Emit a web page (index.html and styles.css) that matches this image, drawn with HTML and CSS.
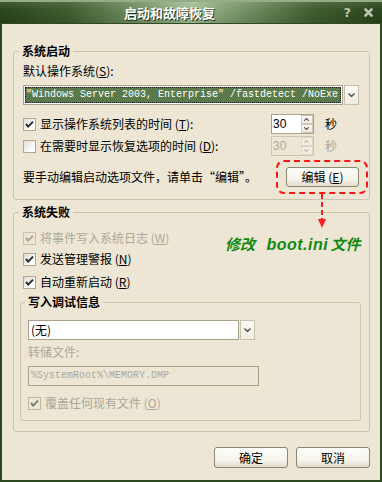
FILE: index.html
```html
<!DOCTYPE html>
<html lang="zh-CN">

<head>
  <meta charset="UTF-8">
  <title>启动和故障恢复</title>
  <link rel="stylesheet" href="styles.css">
</head>

<body>
  <div class="window">
    <div class="titlebar">
      <span class="title">启动和故障恢复</span>
      <span class="help">?</span>
      <svg class="close" width="9" height="9" viewBox="0 0 9 9">
        <path d="M1.5 1.5 L7.5 7.5 M7.5 1.5 L1.5 7.5" stroke="#bcc4b3" stroke-width="2.6" stroke-linecap="round" />
      </svg>
    </div>

    <div class="body">
      <div class="group">
        <div class="group-title">系统启动</div>
        <div class="label">默认操作系统(<u>S</u>):</div>
        <div class="combo combo-os">
          <div class="combo-field"><span class="sel">"Windows Server 2003, Enterprise" /fastdetect /NoExe</span></div>
          <div class="combo-btn"><svg width="7" height="4" viewBox="0 0 7 4"><path d="M0.5 0.5 L3.5 3.5 L6.5 0.5" fill="none" stroke="#4d4d4d" stroke-width="1.4" /></svg></div>
        </div>

        <div class="row">
          <span class="cb"><svg width="11" height="11" viewBox="0 0 11 11"><polyline points="2,5 4.2,7.6 9,2.6" fill="none" stroke="#2b2b2b" stroke-width="2" /></svg></span>
          <span class="cb-label">显示操作系统列表的时间 (<u>T</u>):</span>
          <div class="spin">
            <span class="spin-val">30</span>
            <span class="spin-btns">
              <span class="spin-b"><svg width="5" height="3" viewBox="0 0 5 3"><path d="M0.3 2.7 L2.5 0.5 L4.7 2.7" fill="none" stroke="#4d4d4d" stroke-width="1.1" /></svg></span>
              <span class="spin-b"><svg width="5" height="3" viewBox="0 0 5 3"><path d="M0.3 0.3 L2.5 2.5 L4.7 0.3" fill="none" stroke="#4d4d4d" stroke-width="1.1" /></svg></span>
            </span>
          </div>
          <span class="sec">秒</span>
        </div>

        <div class="row row-2">
          <span class="cb"></span>
          <span class="cb-label">在需要时显示恢复选项的时间 (<u>D</u>):</span>
          <div class="spin off">
            <span class="spin-val">30</span>
            <span class="spin-btns">
              <span class="spin-b"><svg width="5" height="3" viewBox="0 0 5 3"><path d="M0.3 2.7 L2.5 0.5 L4.7 2.7" fill="none" stroke="#c2bfb2" stroke-width="1.1" /></svg></span>
              <span class="spin-b"><svg width="5" height="3" viewBox="0 0 5 3"><path d="M0.3 0.3 L2.5 2.5 L4.7 0.3" fill="none" stroke="#c2bfb2" stroke-width="1.1" /></svg></span>
            </span>
          </div>
          <span class="sec off">秒</span>
        </div>

        <div class="edit-row">
          <span class="cb-label">要手动编辑启动选项文件，请单击“编辑”。</span>
          <div class="mark">
            <div class="btn">编辑 (<u>E</u>)</div>
          </div>
        </div>
      </div>

      <div class="group group-fail">
        <div class="group-title">系统失败</div>
        <div class="row fr-1 off">
          <span class="cb cb-off"><svg width="11" height="11" viewBox="0 0 11 11"><polyline points="2,5 4.2,7.6 9,2.6" fill="none" stroke="#a9a697" stroke-width="2" /></svg></span>
          <span class="cb-label">将事件写入系统日志 (<u>W</u>)</span>
        </div>
        <div class="row fr-2">
          <span class="cb"><svg width="11" height="11" viewBox="0 0 11 11"><polyline points="2,5 4.2,7.6 9,2.6" fill="none" stroke="#2b2b2b" stroke-width="2" /></svg></span>
          <span class="cb-label">发送管理警报 (<u>N</u>)</span>
        </div>
        <div class="row fr-3">
          <span class="cb"><svg width="11" height="11" viewBox="0 0 11 11"><polyline points="2,5 4.2,7.6 9,2.6" fill="none" stroke="#2b2b2b" stroke-width="2" /></svg></span>
          <span class="cb-label">自动重新启动 (<u>R</u>)</span>
        </div>

        <div class="group inner">
          <div class="group-title">写入调试信息</div>
          <div class="combo combo-dump">
            <div class="combo-field"><span class="plain">(无)</span></div>
            <div class="combo-btn"><svg width="7" height="4" viewBox="0 0 7 4"><path d="M0.5 0.5 L3.5 3.5 L6.5 0.5" fill="none" stroke="#4d4d4d" stroke-width="1.4" /></svg></div>
          </div>
          <div class="label off dump-label">转储文件:</div>
          <div class="field-off">%SystemRoot%\MEMORY.DMP</div>
          <div class="row fr-4 off">
            <span class="cb cb-off"><svg width="11" height="11" viewBox="0 0 11 11"><polyline points="2,5 4.2,7.6 9,2.6" fill="none" stroke="#7d7b72" stroke-width="2" /></svg></span>
            <span class="cb-label">覆盖任何现有文件 (<u>O</u>)</span>
          </div>
        </div>
      </div>

      <div class="actions">
        <div class="btn">确定</div>
        <div class="btn">取消</div>
      </div>
    </div>

    <svg class="arrow" width="12" height="36" viewBox="0 0 12 36">
      <line x1="6" y1="0" x2="6" y2="26" stroke="#ff1a1a" stroke-width="2" stroke-dasharray="5 3" />
      <path d="M2 25 L10 25 L6 34 Z" fill="#ff1a1a" />
    </svg>
    <div class="note">修改 <span class="note-en">boot.ini</span> 文件</div>
  </div>
</body>

</html>
```

FILE: styles.css
```css
* {
  margin: 0;
  padding: 0;
  box-sizing: border-box;
}

body {
  background: #ede6d4;
  font-family: "Noto Sans CJK SC", "Liberation Sans", sans-serif;
  font-size: 12px;
  color: #000;
}

.window {
  position: relative;
  width: 382px;
  height: 482px;
}

.titlebar {
  display: flex;
  align-items: center;
  height: 24px;
  border-top: 2px solid #94ad86;
  border-bottom: 1px solid #2e4a22;
  background:
    linear-gradient(rgba(255, 255, 255, 0.1), rgba(255, 255, 255, 0) 40%, rgba(0, 0, 0, 0.1)),
    linear-gradient(to right, #2a451c 0%, #3f5c2f 18%, #7f9c70 40%, #a3bd95 50%, #7f9c70 60%, #3f5c2f 82%, #2a451c 100%);
}

.title {
  margin-left: 124px;
  color: #fff;
  font-size: 13px;
  font-weight: bold;
  text-shadow: 1px 1px 0 #1d3312;
}

.help {
  margin-left: auto;
  color: #bcc4b3;
  font-family: "DejaVu Sans", sans-serif;
  font-weight: bold;
  font-size: 13px;
}

.close {
  margin: 0 9px 0 13px;
}

.body {
  height: 458px;
  border: 2px solid #2c481e;
  border-top: 0;
  padding: 27px 10px 0 11px;
}

.group {
  border: 1px solid #cdc5ab;
  border-radius: 3px;
  padding: 0 9px 5px;
}

.group-title {
  width: fit-content;
  margin: -8px 0 0 -4px;
  padding: 0 3px;
  background: #ede6d4;
  font-weight: bold;
  line-height: 14px;
}

.label {
  margin-top: 6px;
  line-height: 14px;
}

.off {
  color: #aca899;
}

.combo {
  display: flex;
  height: 20px;
}

.combo-os {
  width: 336px;
  margin-top: 7px;
}

.combo-field {
  flex: 1;
  display: flex;
  align-items: center;
  background: #fff;
  border: 1px solid #a9a38b;
  padding: 1px;
}

.sel {
  flex: 1;
  height: 16px;
  line-height: 14px;
  background: #5b7a4b;
  color: #fff;
  border: 1px dotted #1b1b1b;
  font-family: "Liberation Mono", monospace;
  font-size: 10px;
  white-space: nowrap;
  overflow: hidden;
}

.plain {
  padding-left: 1px;
  line-height: 16px;
}

.combo-btn {
  width: 15px;
  display: flex;
  align-items: center;
  justify-content: center;
  background: linear-gradient(#fbfaf5, #efece0);
  border: 1px solid #c8c2ac;
  margin-left: 1px;
}

.row {
  display: flex;
  align-items: center;
  height: 20px;
  margin-top: 9px;
}

.row-2 {
  margin-top: 2px;
}

.cb {
  width: 13px;
  height: 13px;
  border: 1px solid #b2a98c;
  background: linear-gradient(135deg, #dfddd3, #fff 80%);
  display: flex;
  align-items: center;
  justify-content: center;
  margin-right: 4px;
}

.cb-off {
  background: #ede6d4;
  border-color: #cac3ab;
}

.cb-label {
  flex: 1;
  line-height: 14px;
  white-space: nowrap;
}

.spin {
  display: flex;
  width: 43px;
  height: 20px;
  border: 1px solid #a9a38b;
  background: #fff;
}

.spin.off {
  border-color: #cdc7b2;
  background: #ede6d4;
  color: #aca899;
}

.spin-val {
  flex: 1;
  padding-left: 1px;
  line-height: 18px;
  font-family: "Liberation Sans", sans-serif;
  font-size: 12px;
}

.spin-btns {
  display: flex;
  flex-direction: column;
  width: 12px;
}

.spin-b {
  flex: 1;
  display: flex;
  align-items: center;
  justify-content: center;
  border: 1px solid #cfc9b4;
  background: linear-gradient(#fbfaf5, #ece9dc);
}

.spin.off .spin-b {
  border-color: #dcd7c6;
  background: #f1ede2;
}

.sec {
  margin: 0 23px 0 11px;
  line-height: 14px;
}

.edit-row {
  display: flex;
  align-items: center;
  margin-top: 4px;
  margin-right: -8px;
}

.mark {
  border: 2px dashed #ff1414;
  border-radius: 8px;
  padding: 5px 7px 5px 8px;
}

.btn {
  width: 73px;
  height: 20px;
  border: 1px solid #8a866f;
  border-radius: 3px;
  background: linear-gradient(#fefefb, #f5f3ea 65%, #e2dccb);
  text-align: center;
  line-height: 18px;
}

.group-fail {
  margin-top: 12px;
  padding-bottom: 10px;
}

.fr-2 {
  margin-top: 1px;
}

.fr-3 {
  margin-top: 3px;
}

.inner {
  margin: 10px -1px 0 -3px;
  padding: 0 7px 7px;
}

.inner .group-title {
  margin-left: -3px;
}

.combo-dump {
  width: 227px;
  margin-top: 11px;
}

.dump-label {
  margin-top: 5px;
}

.field-off {
  width: 231px;
  height: 20px;
  margin-top: 7px;
  border: 1px solid #a9a38b;
  padding-left: 2px;
  color: #aca899;
  font-family: "Liberation Mono", monospace;
  font-size: 10px;
  line-height: 18px;
}

.fr-4 {
  margin-top: 7px;
}

.fr-4 .cb-off {
  border-color: #c2b99c;
}

.actions {
  display: flex;
  justify-content: flex-end;
  gap: 8px;
  margin-top: 15px;
}

.actions .btn {
  width: 74px;
  height: 21px;
  line-height: 19px;
}

.arrow {
  position: absolute;
  left: 316px;
  top: 194px;
}

.note {
  position: absolute;
  left: 225px;
  top: 233px;
  color: #118a11;
  font-size: 15px;
  font-weight: bold;
  font-style: italic;
  white-space: nowrap;
}

.note-en {
  font-family: "Liberation Sans", sans-serif;
  font-size: 16px;
  letter-spacing: 0.5px;
  margin: 0 -1px 0 8px;
}
```
